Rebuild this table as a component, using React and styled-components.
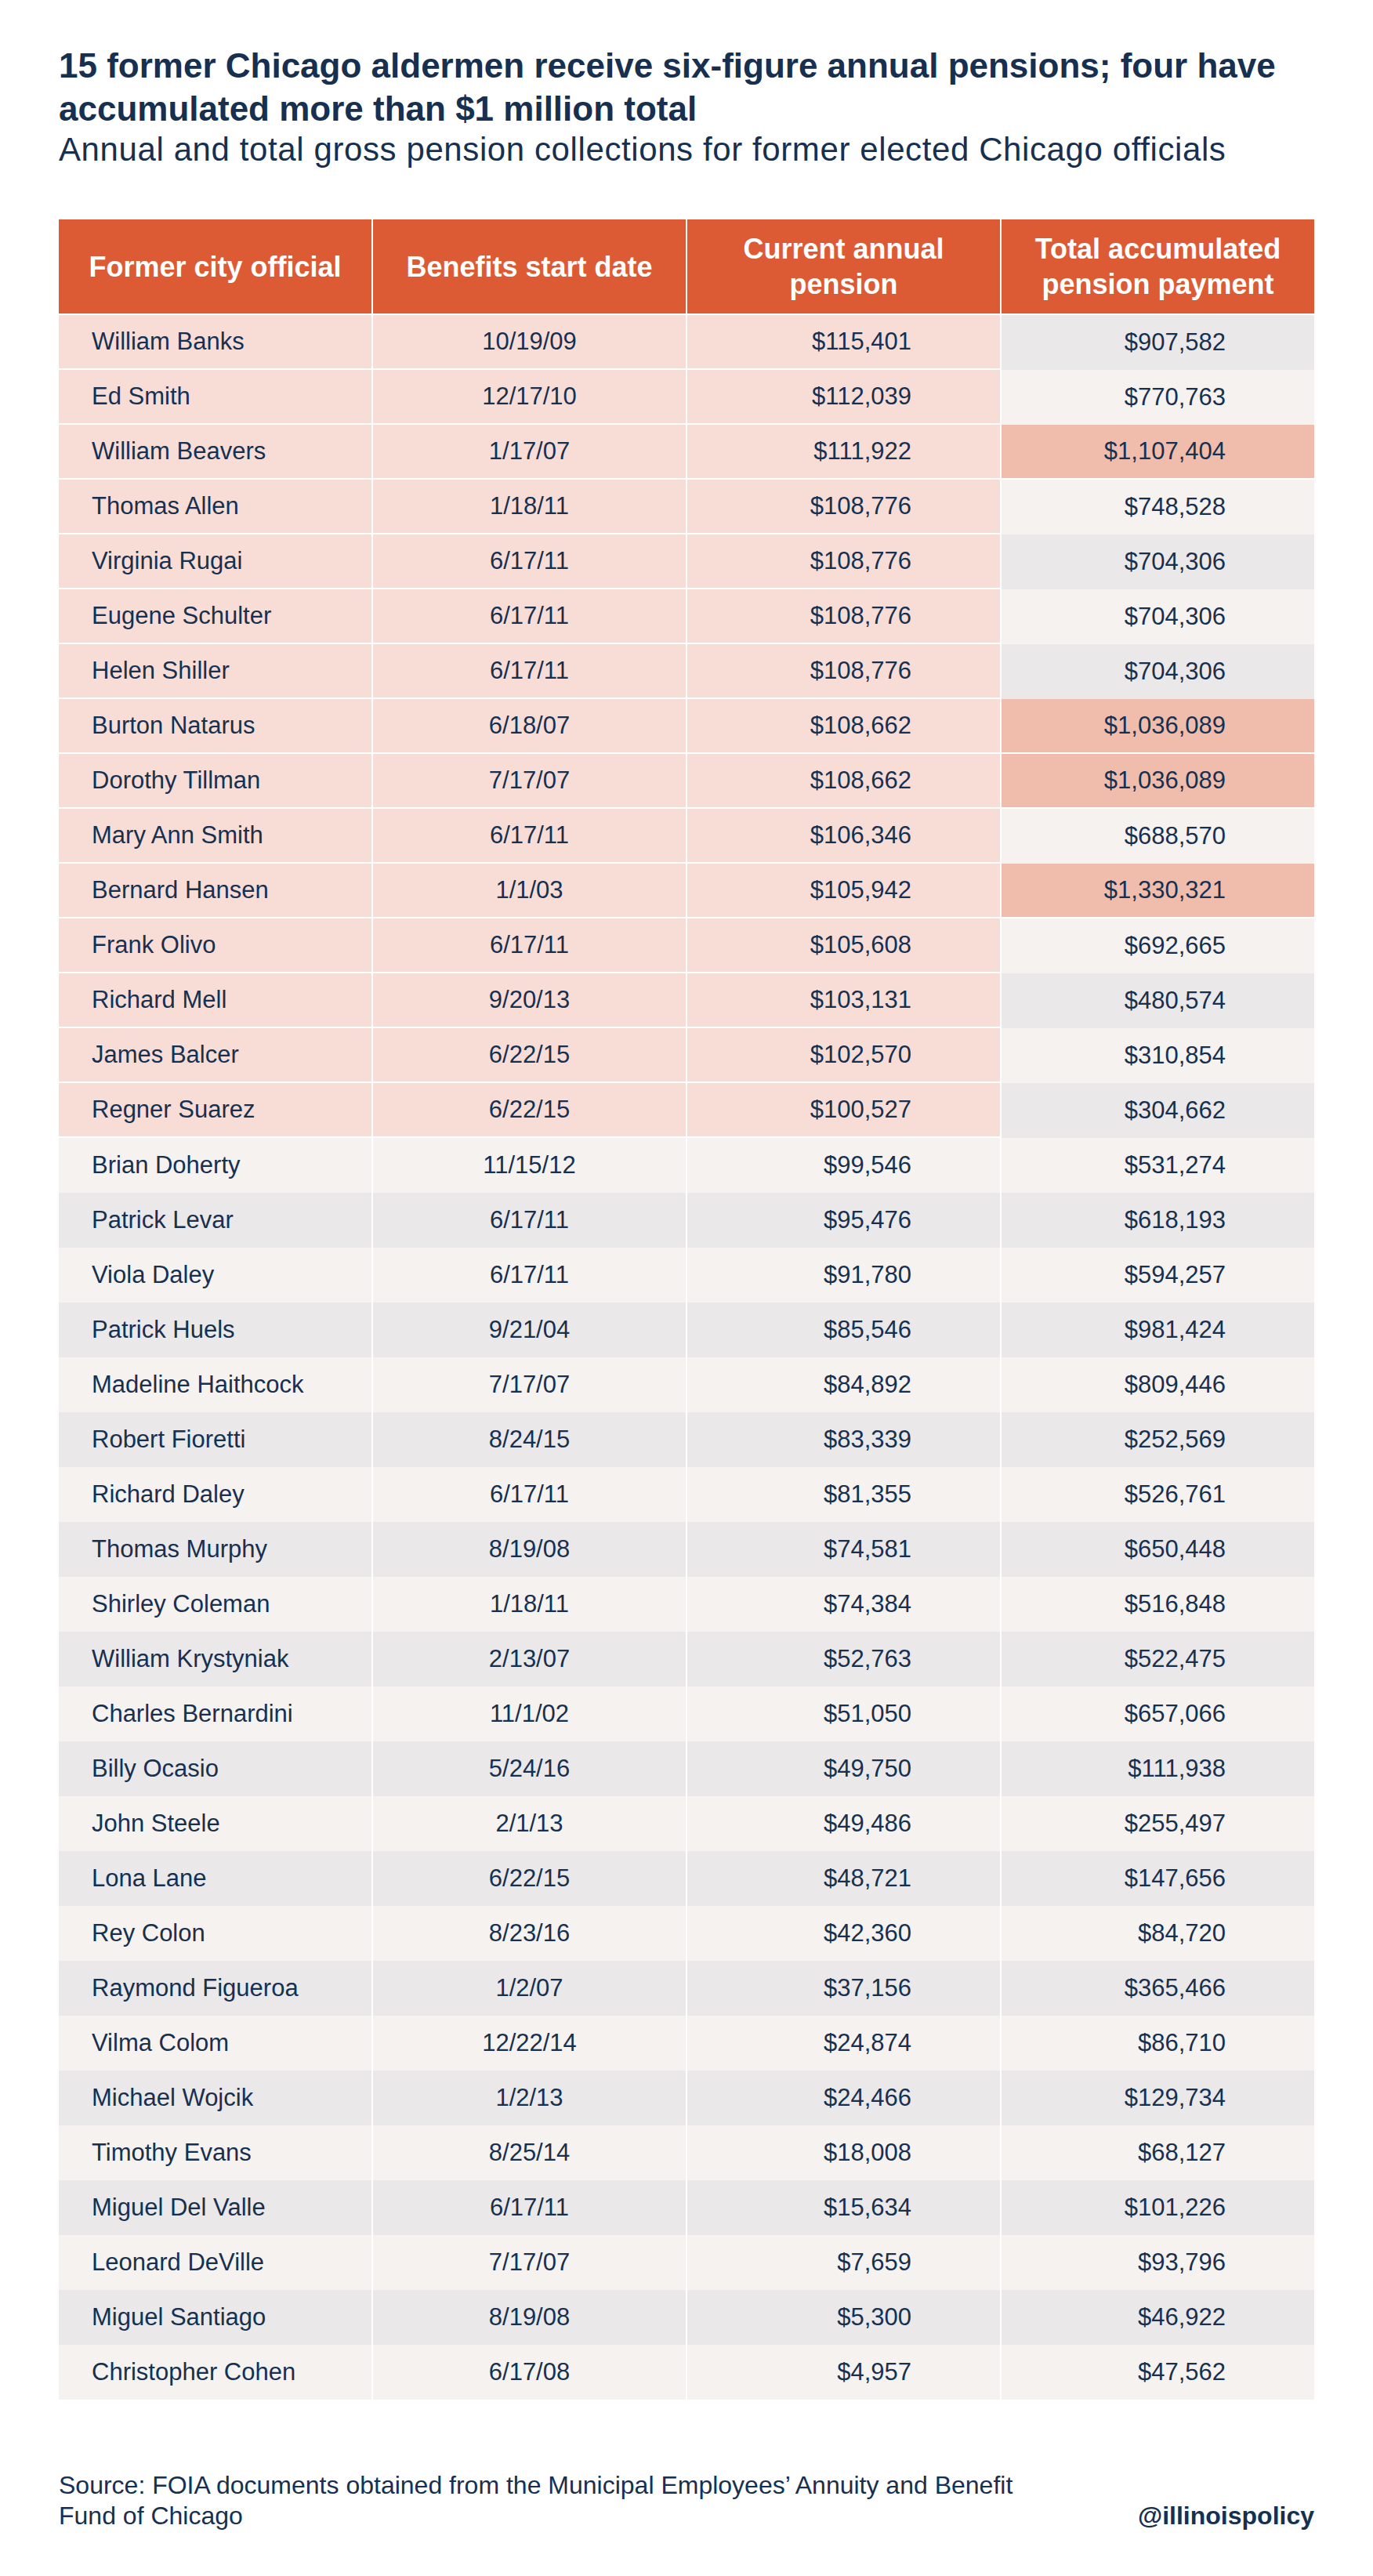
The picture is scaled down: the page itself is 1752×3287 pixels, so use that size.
import React from "react";
import styled, { createGlobalStyle } from "styled-components";

const navy = "#17304f";

const GlobalStyle = createGlobalStyle`
  body {
    margin: 0;
    background: #ffffff;
    font-family: "Liberation Sans", Arial, sans-serif;
    color: ${navy};
  }
`;

const Page = styled.div`
  width: 1752px;
  min-height: 3287px;
  box-sizing: border-box;
  padding: 56px 75px 60px;
  background: #ffffff;
`;

const Title = styled.h1`
  margin: 0;
  font-size: 44px;
  line-height: 55px;
  font-weight: 700;
  color: ${navy};
`;

const Subtitle = styled.p`
  margin: 0;
  font-size: 42px;
  line-height: 50px;
  letter-spacing: 0.6px;
  font-weight: 400;
  color: ${navy};
`;

const Table = styled.div`
  margin-top: 64px;
  display: grid;
  grid-template-columns: repeat(4, 1fr);
  column-gap: 2px;
`;

const HeadCell = styled.div`
  height: 122px;
  box-sizing: border-box;
  border-bottom: 2px solid #ffffff;
  background: #dc5b34;
  color: #ffffff;
  font-size: 36px;
  line-height: 45px;
  font-weight: 700;
  display: flex;
  align-items: center;
  justify-content: center;
  text-align: center;
`;

const tones = {
  pink: "#f8ddd7",
  light: "#f6f2ef",
  grey: "#eae8e9",
  hl: "#f0bdac",
};

const Cell = styled.div`
  height: 70px;
  box-sizing: border-box;
  background: ${(p) => tones[p.$tone]};
  border-bottom: ${(p) =>
    p.$tone === "pink" || p.$tone === "hl" ? "2px solid #ffffff" : "none"};
  display: flex;
  align-items: center;
  justify-content: ${(p) =>
    p.$align === "left" ? "flex-start" : p.$align === "right" ? "flex-end" : "center"};
  padding: ${(p) =>
    p.$align === "left" ? "0 0 0 42px" : p.$align === "right" ? "0 113px 0 0" : "0"};
  font-size: 31px;
  color: ${navy};
  white-space: nowrap;
`;

const Footer = styled.div`
  margin-top: 90px;
  display: flex;
  justify-content: space-between;
  align-items: flex-end;
`;

const Source = styled.p`
  margin: 0;
  font-size: 32px;
  line-height: 39px;
  color: ${navy};
`;

const Handle = styled.span`
  font-size: 32px;
  line-height: 39px;
  font-weight: 700;
  color: ${navy};
`;

const rows = [
  ["William Banks", "10/19/09", "$115,401", "$907,582"],
  ["Ed Smith", "12/17/10", "$112,039", "$770,763"],
  ["William Beavers", "1/17/07", "$111,922", "$1,107,404", true],
  ["Thomas Allen", "1/18/11", "$108,776", "$748,528"],
  ["Virginia Rugai", "6/17/11", "$108,776", "$704,306"],
  ["Eugene Schulter", "6/17/11", "$108,776", "$704,306"],
  ["Helen Shiller", "6/17/11", "$108,776", "$704,306"],
  ["Burton Natarus", "6/18/07", "$108,662", "$1,036,089", true],
  ["Dorothy Tillman", "7/17/07", "$108,662", "$1,036,089", true],
  ["Mary Ann Smith", "6/17/11", "$106,346", "$688,570"],
  ["Bernard Hansen", "1/1/03", "$105,942", "$1,330,321", true],
  ["Frank Olivo", "6/17/11", "$105,608", "$692,665"],
  ["Richard Mell", "9/20/13", "$103,131", "$480,574"],
  ["James Balcer", "6/22/15", "$102,570", "$310,854"],
  ["Regner Suarez", "6/22/15", "$100,527", "$304,662"],
  ["Brian Doherty", "11/15/12", "$99,546", "$531,274"],
  ["Patrick Levar", "6/17/11", "$95,476", "$618,193"],
  ["Viola Daley", "6/17/11", "$91,780", "$594,257"],
  ["Patrick Huels", "9/21/04", "$85,546", "$981,424"],
  ["Madeline Haithcock", "7/17/07", "$84,892", "$809,446"],
  ["Robert Fioretti", "8/24/15", "$83,339", "$252,569"],
  ["Richard Daley", "6/17/11", "$81,355", "$526,761"],
  ["Thomas Murphy", "8/19/08", "$74,581", "$650,448"],
  ["Shirley Coleman", "1/18/11", "$74,384", "$516,848"],
  ["William Krystyniak", "2/13/07", "$52,763", "$522,475"],
  ["Charles Bernardini", "11/1/02", "$51,050", "$657,066"],
  ["Billy Ocasio", "5/24/16", "$49,750", "$111,938"],
  ["John Steele", "2/1/13", "$49,486", "$255,497"],
  ["Lona Lane", "6/22/15", "$48,721", "$147,656"],
  ["Rey Colon", "8/23/16", "$42,360", "$84,720"],
  ["Raymond Figueroa", "1/2/07", "$37,156", "$365,466"],
  ["Vilma Colom", "12/22/14", "$24,874", "$86,710"],
  ["Michael Wojcik", "1/2/13", "$24,466", "$129,734"],
  ["Timothy Evans", "8/25/14", "$18,008", "$68,127"],
  ["Miguel Del Valle", "6/17/11", "$15,634", "$101,226"],
  ["Leonard DeVille", "7/17/07", "$7,659", "$93,796"],
  ["Miguel Santiago", "8/19/08", "$5,300", "$46,922"],
  ["Christopher Cohen", "6/17/08", "$4,957", "$47,562"],
];

const App = () => {
  return (
    <Page>
      <GlobalStyle />
      <Title>
        15 former Chicago aldermen receive six-figure annual pensions; four have
        <br />
        accumulated more than $1 million total
      </Title>
      <Subtitle>
        Annual and total gross pension collections for former elected Chicago officials
      </Subtitle>

      <Table>
        <HeadCell>Former city official</HeadCell>
        <HeadCell>Benefits start date</HeadCell>
        <HeadCell>
          Current annual
          <br />
          pension
        </HeadCell>
        <HeadCell>
          Total accumulated
          <br />
          pension payment
        </HeadCell>

        {rows.map(([name, date, annual, total, over], i) => {
          const stripe = i % 2 === 0 ? "grey" : "light";
          const main = i < 15 ? "pink" : stripe;
          const last = over ? "hl" : stripe;
          return (
            <React.Fragment key={name}>
              <Cell $tone={main} $align="left">{name}</Cell>
              <Cell $tone={main}>{date}</Cell>
              <Cell $tone={main} $align="right">{annual}</Cell>
              <Cell $tone={last} $align="right">{total}</Cell>
            </React.Fragment>
          );
        })}
      </Table>

      <Footer>
        <Source>
          Source: FOIA documents obtained from the Municipal Employees’ Annuity and Benefit
          <br />
          Fund of Chicago
        </Source>
        <Handle>@illinoispolicy</Handle>
      </Footer>
    </Page>
  );
};

export default App;
